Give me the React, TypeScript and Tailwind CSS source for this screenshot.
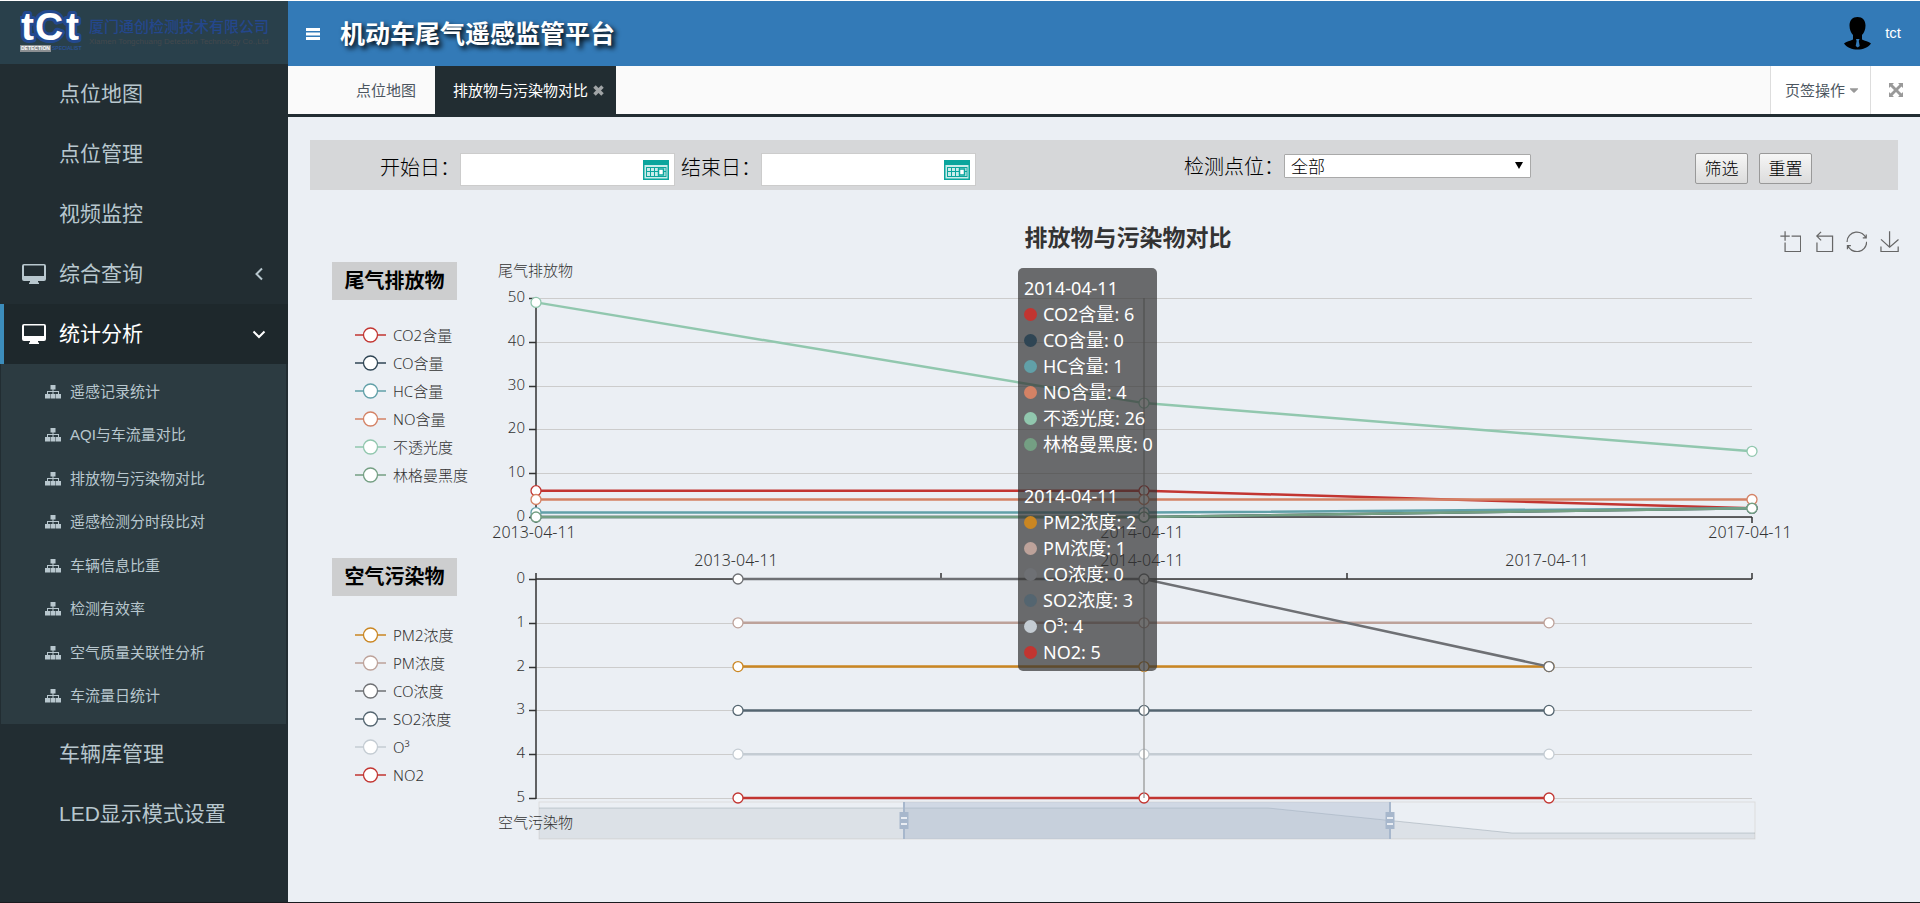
import { useState } from "react";
import { FaCaretDown } from "react-icons/fa";

type Series = { name: string; color: string; data: number[] };

const DATES = ["2013-04-11", "2014-04-11", "2017-04-11"];

const exhaust: Series[] = [
  { name: "CO2含量", color: "#c23531", data: [6, 6, 2] },
  { name: "CO含量", color: "#2f4554", data: [0, 0, 2] },
  { name: "HC含量", color: "#61a0a8", data: [1, 1, 2] },
  { name: "NO含量", color: "#d48265", data: [4, 4, 4] },
  { name: "不透光度", color: "#91c7ae", data: [49, 26, 15] },
  { name: "林格曼黑度", color: "#749f83", data: [0, 0, 2] },
];

const air: Series[] = [
  { name: "PM2浓度", color: "#ca8622", data: [2, 2, 2] },
  { name: "PM浓度", color: "#bda29a", data: [1, 1, 1] },
  { name: "CO浓度", color: "#6e7074", data: [0, 0, 2] },
  { name: "SO2浓度", color: "#546570", data: [3, 3, 3] },
  { name: "O³", color: "#c4ccd3", data: [4, 4, 4] },
  { name: "NO2", color: "#c23531", data: [5, 5, 5] },
];

const subMenu = [
  "遥感记录统计",
  "AQI与车流量对比",
  "排放物与污染物对比",
  "遥感检测分时段比对",
  "车辆信息比重",
  "检测有效率",
  "空气质量关联性分析",
  "车流量日统计",
];

const DesktopIcon = () => (
  <svg width="24" height="20" viewBox="0 0 24 20" fill="currentColor">
    <path
      fillRule="evenodd"
      d="M2 0h20a2 2 0 0 1 2 2v13a2 2 0 0 1-2 2h-6v1l1 1v1H7v-1l1-1v-1H2a2 2 0 0 1-2-2V2a2 2 0 0 1 2-2zm0 1.500v10.500h20V1.500z"
    />
  </svg>
);

const SitemapIcon = () => (
  <svg width="16" height="14" viewBox="0 0 16 14" fill="currentColor">
    <path d="M5.500 0h5v4.500h-2v1.500h5.500v3h2v4.500h-5V9h2V7H8.500v2h2v4.500h-5V9h2V7H3v2h2v4.500H0V9h2V6h5.500V4.500h-2z" />
  </svg>
);

const ArrowIcon = ({ open }: { open?: boolean }) => (
  <svg width="14" height="14" viewBox="0 0 14 14" fill="none" stroke="currentColor" strokeWidth="2">
    <path d={open ? "M1.500 4.500 7 10l5.500-5.500" : "M10 1.500 4.500 7l5.500 5.500"} />
  </svg>
);

const BarsIcon = () => (
  <svg width="14" height="12" viewBox="0 0 14 12" fill="currentColor">
    <path d="M0 0h14v3H0zM0 4.500h14v3H0zM0 9h14v3H0z" />
  </svg>
);

const CloseIcon = () => (
  <svg width="11" height="11" viewBox="0 0 11 11" stroke="currentColor" strokeWidth="3.500">
    <path d="M1.500 1.500l8 8M9.500 1.500l-8 8" />
  </svg>
);

const CalendarIcon = () => (
  <svg width="26" height="20" viewBox="0 0 26 20">
    <rect width="26" height="20" fill="#0aa59d" />
    <rect x="1.500" y="5" width="23" height="13.500" fill="#c9ecea" />
    <g fill="none" stroke="#0aa59d">
      <path d="M3 7.500h20M3 11.500h20M3 16.500h20M3.500 7v10M7.500 7v10M11.500 7v10M15.500 7v10M23 7v10" />
      <rect x="15.500" y="9" width="5" height="6" fill="#fff" strokeWidth="1.500" />
    </g>
  </svg>
);

const UserIcon = () => (
  <svg width="27" height="33" viewBox="0 0 27 33">
    <path
      d="M13.500 0c5 0 8 3.300 8 8.500 0 4-1.500 7.500-3.500 9.500v4.500c2.500 1.500 7 2 9 4-3 4-8 6-13.500 6S3 30.500 0 26.500c2-2 6.500-2.500 9-4V18C7 16 5.500 12.500 5.500 8.500 5.500 3.300 8.500 0 13.500 0z"
      fill="#000"
    />
    <path d="M12 22h3.500l-.7 2 .9 5-2 1.500-2-1.500.9-5z" fill="#337ab7" />
  </svg>
);

const ExpandIcon = () => (
  <svg width="14" height="14" viewBox="0 0 14 14" fill="#999">
    <path d="M0 0h5L3.500 1.500 7 5l3.500-3.500L9 0h5v5l-1.500-1.500L9 7l3.500 3.500L14 9v5H9l1.500-1.500L7 9l-3.500 3.500L5 14H0V9l1.500 1.500L5 7 1.500 3.500 0 5z" />
  </svg>
);

const Logo = () => (
  <svg width="262" height="56" viewBox="0 0 262 56">
    <g
      fontFamily="Liberation Sans"
      fontWeight="bold"
      fontSize="39"
      fill="#fff"
      stroke="#23498f"
      strokeWidth="6"
      strokeLinejoin="round"
      paintOrder="stroke"
    >
      <text x="1" y="39">t</text>
      <text x="15" y="39">C</text>
      <text x="46" y="39">t</text>
    </g>
    <rect x="0" y="44" width="31" height="7" fill="#8b8f92" />
    <g fontFamily="Liberation Sans" fontWeight="bold" fontSize="5">
      <text x="1" y="49" fill="#fff">DETECTION</text>
      <text x="32" y="49" fill="#2b5394">SPECIALIST</text>
    </g>
    <text x="69" y="31" fontSize="15" fontFamily="Noto Sans CJK SC" fontWeight="500" fill="#24478c">
      厦门通创检测技术有限公司
    </text>
    <text x="69" y="43" fontSize="8" fontFamily="Liberation Sans" fill="#43494d">
      Xiamen Tongchuang Detection Technology Co.,Ltd
    </text>
  </svg>
);

const MenuLink = ({ label }: { label: string }) => (
  <a href="#" className="flex h-[60px] items-center pl-[59px]">
    {label}
  </a>
);

const Sidebar = () => (
  <aside className="flex w-72 shrink-0 flex-col bg-[#222d32] font-['Liberation_Sans','Noto_Sans_CJK_SC',sans-serif] text-[21px] text-[#b8c7ce]">
    <div className="flex h-16 items-start border-t border-white bg-[#29404b] pl-5">
      <Logo />
    </div>
    <nav>
      <MenuLink label="点位地图" />
      <MenuLink label="点位管理" />
      <MenuLink label="视频监控" />
      <a href="#" className="flex h-[60px] items-center pr-[22px] pl-[22px]">
        <DesktopIcon />
        <span className="ml-[13px] flex-1">综合查询</span>
        <ArrowIcon />
      </a>
      <a
        href="#"
        className="flex h-[60px] items-center border-l-4 border-[#3c8dbc] bg-[#1e282c] pr-[22px] pl-[18px] text-white"
      >
        <DesktopIcon />
        <span className="ml-[13px] flex-1">统计分析</span>
        <ArrowIcon open />
      </a>
      <ul className="mr-[2px] ml-px grid h-[360px] auto-rows-fr bg-[#2c3b41] py-[6px] text-[15px]">
        {subMenu.map((item) => (
          <li key={item} className="flex">
            <a href="#" className="flex flex-1 items-center gap-[9px] pl-11">
              <SitemapIcon />
              {item}
            </a>
          </li>
        ))}
      </ul>
      <MenuLink label="车辆库管理" />
      <MenuLink label="LED显示模式设置" />
    </nav>
  </aside>
);

const Header = () => (
  <header className="flex h-[66px] items-center border-t border-white bg-[#337ab7] pr-[19px] pl-[18px] text-white">
    <button type="button" aria-label="菜单">
      <BarsIcon />
    </button>
    <h1 className="ml-[20px] flex-1 text-[25px] font-bold [text-shadow:3px_3px_5px_#000]">
      机动车尾气遥感监管平台
    </h1>
    <a href="#" className="flex items-center gap-[14px] font-['Liberation_Sans',sans-serif] text-[15px]">
      <UserIcon />
      tct
    </a>
  </header>
);

const TabBar = () => (
  <div className="flex h-[51px] border-b-[3px] border-[#222d32] bg-[#fafafa] pl-[50px] text-[15px] text-[#4c5660]">
    <a href="#" className="flex items-center pr-[19px] pl-[18px]">
      点位地图
    </a>
    <div className="flex items-center gap-[5px] bg-[#222d32] pr-3 pl-[18px] text-white">
      排放物与污染物对比
      <button type="button" aria-label="关闭" className="text-[#a0a4a6]">
        <CloseIcon />
      </button>
    </div>
    <button
      type="button"
      className="ml-auto flex w-[101px] items-center gap-[2px] border-x border-[#ddd] bg-white pl-[14px]"
    >
      页签操作
      <FaCaretDown size={14} color="#999" />
    </button>
    <button type="button" aria-label="全屏" className="flex w-[49px] items-center justify-center bg-white">
      <ExpandIcon />
    </button>
  </div>
);

const DateField = ({ id, label }: { id: string; label: string }) => (
  <div className="flex items-start">
    <label htmlFor={id} className="w-20 leading-[30px] whitespace-nowrap">
      {label}
    </label>
    <div className="relative">
      <input id={id} type="text" className="h-[33px] w-[215px] border border-[#ccc] bg-white pr-10 pl-2" />
      <button type="button" aria-label="选择日期" className="absolute top-[7px] right-[6px]">
        <CalendarIcon />
      </button>
    </div>
  </div>
);

const FilterBar = () => {
  const button =
    "h-[31px] w-[53px] rounded-[2px] border border-[#999] bg-linear-to-b from-[#f6f6f6] to-[#dcdcdc] text-[17px]";
  return (
    <form className="flex h-[50px] items-start bg-[#d6d7d9] pt-[13px] pl-[70px] text-[20px] font-light text-black">
      <div className="flex gap-[6px]">
        <DateField id="start" label="开始日：" />
        <DateField id="end" label="结束日：" />
      </div>
      <div className="ml-[13.7%] flex items-start">
        <label htmlFor="site" className="w-[100px] leading-[28px] whitespace-nowrap">
          检测点位：
        </label>
        <div className="relative mt-px">
          <select
            id="site"
            className="block h-[24px] w-[247px] appearance-none rounded-[1px] border border-[#a9a9a9] bg-white pt-[2px] pl-[6px] text-[17px] leading-[20px]"
          >
            <option>全部</option>
          </select>
          <svg
            width="8"
            height="7"
            viewBox="0 0 8 7"
            className="pointer-events-none absolute top-2 right-2"
          >
            <path d="M0 0h8L4 7z" />
          </svg>
        </div>
      </div>
      <div className="ml-[10.8%] flex gap-[11px]">
        <button type="button" className={button}>
          筛选
        </button>
        <button type="reset" className={button}>
          重置
        </button>
      </div>
    </form>
  );
};

const tools = [
  { name: "区域缩放", d: "M0,13.5h26.9 M13.5,26.9V0 M32.1,13.5H58V58H13.5 V32.1" },
  { name: "缩放还原", d: "M22,1.4L9.9,13.5l12.3,12.3 M10.3,13.5H54.9v44.6 H10.3v-26" },
  {
    name: "还原",
    d: "M3.8,33.4 M47,18.9h9.8V8.7 M56.3,20.1 C52.1,9,40.5,0.6,26.8,2.1C12.6,3.7,1.6,16.2,2.1,30.6 M13,41.1H3.1v10.2 M3.7,39.9c4.2,11.1,15.8,19.5,29.5,18 c14.2-1.6,25.2-14.1,24.7-28.5",
  },
  { name: "保存为图片", d: "M4.7,22.9L29.3,45.5L54.7,23.4M4.6,43.6L4.6,58L53.8,58L53.8,43.6M29.2,45.1L29.2,0" },
];

const Toolbox = () => (
  <div className="flex gap-3">
    {tools.map((tool) => (
      <button key={tool.name} type="button" aria-label={tool.name}>
        <svg width="21" height="21" viewBox="-1 -1 60 60" fill="none" stroke="#666" strokeWidth="3.500">
          <path d={tool.d} />
        </svg>
      </button>
    ))}
  </div>
);

type LegendProps = { title: string; series: Series[]; listClass: string };

const Legend = ({ title, series, listClass }: LegendProps) => (
  <section className="pl-[22px] text-[#333]">
    <h3 className="flex h-[38px] w-[125px] items-center justify-center bg-[#cdcecf] text-[20px] font-bold text-black">
      {title}
    </h3>
    <ul className={`${listClass} pl-[23px] text-[15px]`}>
      {series.map((s) => (
        <li key={s.name} className="flex h-7 items-center gap-[7px] whitespace-nowrap">
          <svg width="31" height="18" viewBox="0 0 31 18" stroke={s.color} fill="#fff">
            <path d="M0 9h31" strokeWidth="1.500" />
            <circle cx="15.500" cy="9" r="7" strokeWidth="1.300" />
          </svg>
          {s.name}
        </li>
      ))}
    </ul>
  </section>
);

// Plot geometry in viewBox units
const LEFT = 46;
const RIGHT = 1262;
const TOP_GRID = { top: 38, bottom: 257 };
const LOW_GRID = { top: 319, bottom: 538 };

const topX = [LEFT, 654, RIGHT];
const lowX = [248, 654, 1059];
const topY = (v: number) => TOP_GRID.bottom - (v / 50) * (TOP_GRID.bottom - TOP_GRID.top);
const lowY = (v: number) => LOW_GRID.top + (v / 5) * (LOW_GRID.bottom - LOW_GRID.top);

const Lines = ({ series, xs, y }: { series: Series[]; xs: number[]; y: (v: number) => number }) => (
  <>
    {series.map((s) => (
      <g key={s.name} stroke={s.color}>
        <polyline
          points={s.data.map((v, i) => `${xs[i]},${y(v)}`).join(" ")}
          fill="none"
          strokeWidth="2.500"
        />
        {s.data.map((v, i) => (
          <circle key={i} cx={xs[i]} cy={y(v)} r="5" fill="#fff" strokeWidth="1.300" />
        ))}
      </g>
    ))}
  </>
);

const Handle = ({ x }: { x: number }) => (
  <g>
    <path d={`M${x} 542v37`} stroke="#a7b7cc" strokeWidth="2" />
    <rect x={x - 4.5} y="552" width="9" height="17" fill="#a7b7cc" />
    <path d={`M${x - 3} 558h6M${x - 3} 564h6`} stroke="#fff" strokeWidth="1.500" />
  </g>
);

const Plot = () => (
  <svg viewBox="0 0 1408 590" className="block w-full" fontSize="15" fill="#333">
    <text x="8" y="16">尾气排放物</text>
    {[0, 10, 20, 30, 40, 50].map((v) => (
      <g key={v}>
        <path d={`M${LEFT} ${Math.round(topY(v))}.5H${RIGHT}`} stroke="#ccc" />
        <path d={`M${LEFT - 7} ${Math.round(topY(v))}.5h7`} stroke="#333" strokeWidth="1.500" />
        <text x="35" y={topY(v) + 4} textAnchor="end">{v}</text>
      </g>
    ))}
    {[0, 1, 2, 3, 4, 5].map((v) => (
      <g key={v}>
        <path d={`M${LEFT} ${Math.round(lowY(v))}.5H${RIGHT}`} stroke="#ccc" />
        <path d={`M${LEFT - 7} ${Math.round(lowY(v))}.5h7`} stroke="#333" strokeWidth="1.500" />
        <text x="35" y={lowY(v) + 4} textAnchor="end">{v}</text>
      </g>
    ))}
    <g fontSize="16" textAnchor="middle">
      {DATES.map((d, i) => (
        <text key={d} x={topX[i] - 2} y="278">{d}</text>
      ))}
      {DATES.map((d, i) => (
        <text key={d} x={lowX[i] - 2} y="306">{d}</text>
      ))}
    </g>
    <g fill="none" stroke="#333" strokeWidth="1.500">
      <path d="M46 38v225M46 257H1262M654 257v6M1262 257v6" />
      <path d="M46 313v226M46 319H1262M451 319v-6M857 319v-6M1262 319v-6" />
    </g>

    {/* data zoom slider */}
    <rect x="49" y="542" width="1216" height="37" fill="none" stroke="#ddd" />
    <path d="M49 548H778L1022 573H1265V579H49z" fill="#2f4554" fillOpacity="0.080" />
    <path d="M49 548H778L1022 573H1265" fill="none" stroke="#2f4554" strokeOpacity="0.200" />
    <rect x="414" y="542" width="486" height="37" fill="#a7b7cc" fillOpacity="0.400" />
    <Handle x={414} />
    <Handle x={900} />
    <text x="8" y="568">空气污染物</text>

    <Lines series={exhaust} xs={topX} y={topY} />
    <Lines series={air} xs={lowX} y={lowY} />
    <path d="M654 38v219M654 319v219" stroke="#999" strokeWidth="1.300" />
  </svg>
);

const TooltipGroup = ({ series, index }: { series: Series[]; index: number }) => (
  <div>
    <p>{DATES[index]}</p>
    {series.map((s) => (
      <p key={s.name} className="flex items-center gap-[6px]">
        <span className="size-[13px] rounded-full" style={{ backgroundColor: s.color }} />
        {s.name}: {s.data[index]}
      </p>
    ))}
  </div>
);

const Chart = () => {
  const [active] = useState(1);
  return (
    <section className="font-light">
      <div className="-mr-[2px] flex h-[70px] items-center pt-6">
        <h2 className="flex-1 pl-[166px] text-center text-[23px] font-bold text-[#333]">排放物与污染物对比</h2>
        <div className="pt-2">
          <Toolbox />
        </div>
      </div>
      <div className="flex">
        <div className="flex w-[180px] shrink-0 flex-col gap-[69px] pt-[2px]">
          <Legend title="尾气排放物" series={exhaust} listClass="mt-[21px]" />
          <Legend title="空气污染物" series={air} listClass="mt-[25px]" />
        </div>
        <div className="relative flex-1">
          <Plot />
          <div className="absolute top-2 left-[37.5%] flex flex-col gap-[26px] rounded-[5px] bg-[#323232]/70 pt-[7px] pr-1 pb-[6px] pl-[6px] text-[18px] leading-[26px] font-normal whitespace-nowrap text-white">
            <TooltipGroup series={exhaust} index={active} />
            <TooltipGroup series={air} index={active} />
          </div>
        </div>
      </div>
    </section>
  );
};

export default function App() {
  return (
    <div className="flex min-h-screen border-b border-[#1a1a1f] bg-[#ebeff4] font-['Noto_Sans','Noto_Sans_CJK_SC',sans-serif]">
      <Sidebar />
      <div className="min-w-0 flex-1">
        <Header />
        <TabBar />
        <main className="px-[22px] pt-[23px]">
          <FilterBar />
          <Chart />
        </main>
      </div>
    </div>
  );
}
